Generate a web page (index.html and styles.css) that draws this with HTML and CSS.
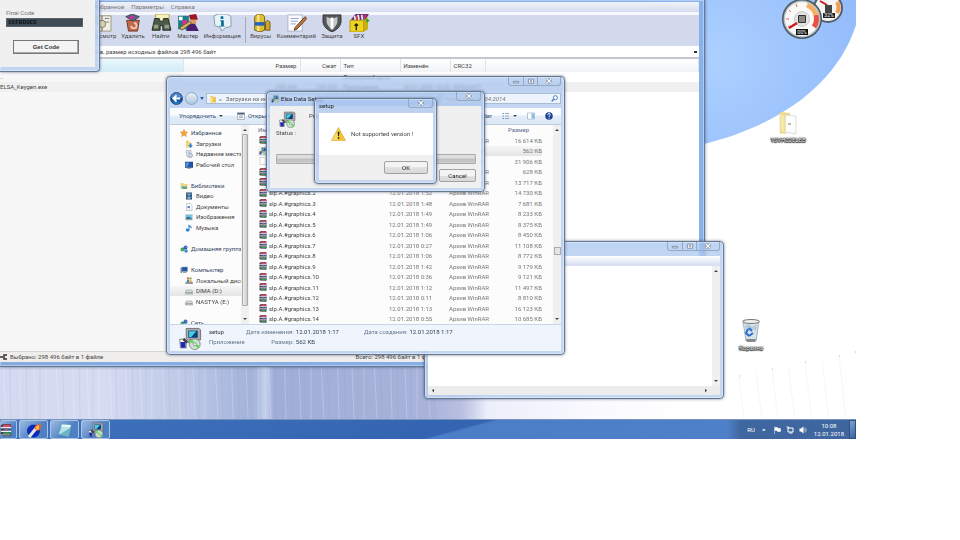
FILE: index.html
```html
<!DOCTYPE html>
<html lang="ru">
<head>
<meta charset="UTF-8">
<meta name="viewport" content="width=device-width, initial-scale=1.0">
<title>Desktop</title>
<link rel="stylesheet" href="styles.css">
</head>
<body>
<!-- Shared icons -->
<svg class="sprite" aria-hidden="true">
    <symbol id="rar" viewBox="0 0 16 16">
        <path d="M1 2l3-2h10l1 2v12l-1 2H4l-3-2z" fill="#4a4148"/>
        <path d="M4 1h10v3H4z" fill="#e0407c"/><path d="M5 6h10v3H5z" fill="#3c5fc4"/><path d="M4 11h11v3H4z" fill="#1c9a6a"/>
        <path d="M1 4h14v1.500H1zM1 9h14v1.500H1z" fill="#f0eef0"/><path d="M1 14h12v1H1z" fill="#d0d0d0"/>
        <path d="M8 1h2v3H8zM8 6h2v3H8zM8 11h2v3H8z" fill="#a8702f"/>
    </symbol>
    <symbol id="setup" viewBox="0 0 32 32">
        <path d="M10 2h18l2 2v14H12l-2-2z" fill="#a9adb0" stroke="#555"/>
        <path d="M13 5h13v10H13z" fill="#0b3f7d"/><path d="M14 6h10l-7 8h-3z" fill="#45d0dc"/>
        <path d="M15 18h10l4 4H12z" fill="#c3c3bd" stroke="#777"/>
        <path d="M1 17h6l3 3v9H2z" fill="#fff" stroke="#555"/><path d="M2 21h7v8H3z" fill="#1b2bb0"/>
        <path d="M7 15l6 5-3 3-5-5z" fill="#444"/>
        <circle cx="22" cy="24" r="7.5" fill="#cfe0d2" stroke="#6b7a6d"/>
        <path d="M22 24l-7-3 3-4zM22 24l7 2-3 4z" fill="#4fe04c"/><circle cx="22" cy="24" r="2" fill="#fff" stroke="#777"/>
    </symbol>
    <symbol id="folder" viewBox="0 0 16 16">
        <path d="M2 2h6l1 2h5v11H2z" fill="#e9c65a"/><path d="M2 2l5 3v11l-5-2z" fill="#f8e596"/>
    </symbol>
    <symbol id="star" viewBox="0 0 16 16"><path d="M8 0l2.400 5.300 5.600.7-4.200 3.900 1.200 5.700L8 12.700l-5 2.900 1.200-5.700L0 6l5.600-.7z" fill="#f0a238" stroke="#cf7f28" stroke-width=".5"/></symbol>
    <symbol id="down" viewBox="0 0 16 16"><path d="M2 1h6v14H2z" fill="#efd273"/><path d="M7 4h6v11H7z" fill="#f6e49c"/><path d="M9 7h4v4h3l-5 5-5-5h3z" fill="#2884cf"/></symbol>
    <symbol id="recent" viewBox="0 0 16 16"><path d="M2 1h10v13H4z" fill="#e6eef3" stroke="#8a99a5"/><path d="M5 4h5M5 6h5" stroke="#6b93b9"/><circle cx="11" cy="11" r="4" fill="#c8dce8" stroke="#778"/></symbol>
    <symbol id="screen" viewBox="0 0 16 16"><path d="M0 2h16v11H0z" fill="#2257a8" stroke="#173d72"/><path d="M1 3h8l-5 9H1z" fill="#5b95dc"/><path d="M4 14h8v1H4z" fill="#666"/></symbol>
    <symbol id="library" viewBox="0 0 16 16"><path d="M1 2h6l1 2h7v9H1z" fill="#f0d67c"/><path d="M3 8h11v6H3z" fill="#7fb9d8"/><path d="M5 10h9v4H5z" fill="#66a95f"/></symbol>
    <symbol id="video" viewBox="0 0 16 16"><path d="M2 1h12v14H2z" fill="#31486a"/><path d="M5 3h6v4H5zM5 9h6v5H5z" fill="#73b5e0"/><path d="M3 2v12M13 2v12" stroke="#ddd" stroke-dasharray="1 2"/></symbol>
    <symbol id="doc" viewBox="0 0 16 16"><path d="M3 1h8l3 3v11H3z" fill="#fff" stroke="#8fa2b3"/><path d="M5 6h5v4H5z" fill="#4f8cc9"/><path d="M5 12h6" stroke="#9ab"/></symbol>
    <symbol id="page" viewBox="0 0 16 16"><path d="M2 1h9l3 3v11H2z" fill="#fff" stroke="#aaa"/></symbol>
    <symbol id="image" viewBox="0 0 16 16"><path d="M1 3h14v11H1z" fill="#fff" stroke="#9aabb5"/><path d="M2 4h12v6H2z" fill="#76c1e2"/><path d="M2 10l4-3 8 4v2H2z" fill="#32748a"/></symbol>
    <symbol id="music" viewBox="0 0 16 16"><path d="M7 0c1 4 8 3 6 10-.5-3-3-4-4-4v6c-1 4-7 4-7 0s3-3 5-2z" fill="#2180cf"/></symbol>
    <symbol id="network" viewBox="0 0 16 16"><circle cx="5" cy="9" r="4" fill="#2f9b53"/><circle cx="11" cy="5" r="4" fill="#2d5dbb"/><circle cx="12" cy="12" r="3.500" fill="#308ed5"/><path d="M3 8l3 3M10 3l3 3" stroke="#fff"/></symbol>
    <symbol id="computer" viewBox="0 0 16 16"><path d="M4 2h11v9H4z" fill="#2356a6" stroke="#8c9aab"/><path d="M1 3h3v11H1z" fill="#788796"/><path d="M6 12h7v2H6z" fill="#98a6b3"/></symbol>
    <symbol id="disk" viewBox="0 0 16 16"><path d="M3 6h10l3 4v4H0v-4z" fill="#d6d9da" stroke="#85898c"/><path d="M1 10h14v3H1z" fill="#a4a9aa"/><path d="M12 11h2v1h-2z" fill="#53c34d"/></symbol>
    <symbol id="osdisk" viewBox="0 0 16 16"><path d="M2 9h13l1 5H0z" fill="#93989a"/><path d="M4 1h4v4H4z" fill="#e15b37"/><path d="M9 1h4v4H9z" fill="#69ad3e"/><path d="M4 6h4v4H4z" fill="#3488cc"/><path d="M9 6h4v4H9z" fill="#ecb636"/></symbol>
    <symbol id="close" viewBox="0 0 10 8"><path d="M2 1l6 6M8 1L2 7" stroke="#68788d" stroke-width="3.500"/><path d="M2 1l6 6M8 1L2 7" stroke="#fff" stroke-width="1.800"/></symbol>
    <symbol id="min" viewBox="0 0 10 8"><path d="M1.500 4.500h7v2h-7z" fill="#fff" stroke="#68788d"/></symbol>
    <symbol id="max" viewBox="0 0 10 8"><path d="M1.500 1.500h7v5.500h-7z" fill="#fff" stroke="#68788d"/><path d="M4 3.500h2v1.500H4z" fill="none" stroke="#68788d"/></symbol>
</svg>

<main class="desktop">
    <svg class="wallpaper" viewBox="0 0 856 419" preserveAspectRatio="none" aria-hidden="true">
        <defs>
            <linearGradient id="lilac" gradientUnits="userSpaceOnUse" x1="0" x2="856" y1="0" y2="0">
                <stop offset="0" stop-color="#d3d9f0"/><stop offset=".12" stop-color="#d6dbf1"/><stop offset=".22" stop-color="#bcc8e6"/>
                <stop offset=".29" stop-color="#a3b3da"/><stop offset=".3" stop-color="#a9b9de"/><stop offset=".31" stop-color="#c9d2ec"/><stop offset=".32" stop-color="#a0aed7"/>
                <stop offset=".5" stop-color="#a8b2da"/><stop offset=".54" stop-color="#b9c0e2"/><stop offset=".57" stop-color="#eceefa"/>
                <stop offset=".7" stop-color="#fafaff"/><stop offset=".8" stop-color="#fff"/>
            </linearGradient>
            <radialGradient id="sky" gradientUnits="userSpaceOnUse" cx="715" cy="60" r="150">
                <stop offset="0" stop-color="#acd0ff"/><stop offset="1" stop-color="#94bcfb"/>
            </radialGradient>
            <pattern id="threads" width="53" height="419" patternUnits="userSpaceOnUse">
                <path d="M2 340l4 79M19 340l2 79M33 340l3 79M46 340v79" stroke="#fff" stroke-opacity=".22"/>
                <path d="M9 340l2 79M26 340l1 79M40 340v79" stroke="#8390c4" stroke-opacity=".14"/>
            </pattern>
        </defs>
        <path d="M0 0h856v419H0z" fill="#fff"/>
        <path d="M0 340h856v79H0z" fill="url(#lilac)"/>
        <path d="M0 340h440v79H0z" fill="url(#threads)"/>
        <path d="M724 340h132v79H724z" fill="#fff"/>
        <path d="M600 0v160q60 0 104-16C770 128 835 90 856 25V0z" fill="url(#sky)"/>
        <path d="M739 377l5 42M756 373l6 46M772 370l6 49M788 366l7 53M805 363l7 56M822 360l7 59M839 356l7 63" stroke="#f7f5fb" fill="none"/>
        <path d="M739 376h1M772 369h1M805 362h1M839 356h1M855 352h1" stroke="#c3a9d6"/>
    </svg>

    <svg class="gadget" viewBox="0 0 80 40" aria-label="CPU 00%, RAM 32%">
        <circle cx="53" cy="8" r="15" fill="#555f68"/><circle cx="53" cy="8" r="13" fill="#f7f5f3"/>
        <path d="M62 2a11 11 0 0 1 0 11" stroke="#ee9e55" stroke-width="4" fill="none"/>
        <path d="M45 1l7 4" stroke="#c4191d" stroke-width="2"/><path d="M50 5h7v8h-7z" fill="#444"/>
        <path d="M48 13h12v5H48z" fill="#222"/><text x="54" y="17" class="meter">32%</text>
        <circle cx="27" cy="19" r="20" fill="#4d5962"/><circle cx="27" cy="19" r="18.500" fill="#b9c4ca"/><circle cx="27" cy="19" r="17" fill="#faf9f8"/>
        <path d="M32 5a15 15 0 0 1 9 10" stroke="#f2b066" stroke-width="5" fill="none"/><path d="M41 15a15 15 0 0 1-2 12" stroke="#e75244" stroke-width="5" fill="none"/>
        <path d="M11 19h3M14 10l2 2M21 4l1 3M13 27l2-1" stroke="#d66"/>
        <circle cx="27" cy="19" r="7.500" fill="#e3e3e3" stroke="#ccc"/>
        <path d="M23.500 15.500h7v7h-7z" fill="#8a8a82" stroke="#333"/><path d="M14 28l8-5" stroke="#c8191c" stroke-width="2.500"/>
        <path d="M21 29h12v6H21z" fill="#111"/><text x="27" y="34" class="meter">00%</text>
    </svg>

    <a href="#" class="shortcut shortcut-folder">
        <svg viewBox="0 0 20 24"><path d="M2 1l10 1v18L2 23z" fill="#ecd985"/><path d="M7 4l11 1v18l-11-2z" fill="#fdfdfd" stroke="#ddd"/><path d="M2 1l5 4v18l-5-3z" fill="#f5e9a6" stroke="#d8c371" stroke-width=".5"/><path d="M10 12h3v2h-3z" fill="#c5bc95"/></svg>
        <span>1SVH02ELEB</span>
    </a>
    <a href="#" class="shortcut shortcut-bin">
        <svg viewBox="0 0 20 24"><path d="M2 2h16l-3 20H5z" fill="#d7e3ea" stroke="#a5b1b9"/><ellipse cx="10" cy="2.500" rx="8.500" ry="2" fill="#eee" stroke="#777"/><path d="M4 7l4-2 3 3 5-3-1 7-4-2-5 3z" fill="#b6cad8"/><path d="M7 10l-2 4 3 3M8 9l3 3M8 17l4-3" stroke="#2e6ed0" stroke-width="2" fill="none"/><path d="M5 20h10l-1 3H6z" fill="#858c90"/></svg>
        <span>Корзина</span>
    </a>

    <section class="window winrar">
        <nav class="menubar"><a href="#">Файл</a><a href="#">Команды</a><a href="#">Операции</a><a href="#">Избранное</a><a href="#">Параметры</a><a href="#">Справка</a></nav>
        <div class="toolbar">
            <button><svg viewBox="0 0 24 20"><path d="M2 2h10v17H2zM12 2h10v17H12z" fill="#efeee6" stroke="#999277"/><path d="M15 5h5M15 9h5M4 5h5M4 9h5" stroke="#777"/><circle cx="12" cy="11" r="4" fill="#ddd4a8" stroke="#777"/></svg>Просмотр</button>
            <button><svg viewBox="0 0 24 20"><path d="M5 7h14l-2 12H7z" fill="#c06a4c" stroke="#6b3020"/><path d="M4 3l7-3 8 3-7 5z" fill="#56618d" stroke="#444"/><path d="M7 4l5-2 2 2-5 2z" fill="#d02f8d"/><path d="M10 13a3 3 0 1 0 3-3" stroke="#f2c6b2" stroke-width="2" fill="none"/></svg>Удалить</button>
            <button><svg viewBox="0 0 24 20"><path d="M6 0h15v11H6z" fill="#f6efb8" stroke="#b7a04d"/><path d="M5 5h5l1 3h3l1-3h5l3 13h-9v-5h-3v5H2z" fill="#4a5a48" stroke="#1d261b"/><path d="M4 12h5v4H4zM16 12h5v4h-5z" fill="#8fa086"/></svg>Найти</button>
            <button><svg viewBox="0 0 24 20"><path d="M1 2h12v15H1z" fill="#1e7c84"/><path d="M2 3h4v4H2z" fill="#fff"/><path d="M6 7h5v5H6z" fill="#e92995"/><path d="M13 1l8-1 2 6-8 2z" fill="#9c1723"/><path d="M14 6h7v5h-6z" fill="#dc9c63"/><path d="M10 19c1-10 8-8 10-8l4 8z" fill="#48206f"/><path d="M3 15l11-7 2 2-11 8z" fill="#e4b651" stroke="#654"/></svg>Мастер</button>
            <button><svg viewBox="0 0 24 20"><path d="M3 2l5-2h10l4 3v11l-6 1-4 4-2-4-6-2z" fill="#e9f3f7" stroke="#7c97a5"/><path d="M10 7h4v6h1v1h-6v-1h2V8h-1zM10.500 2.500h3v3h-3z" fill="#086f9c"/></svg>Информация</button>
            <span class="divider"></span>
            <button><svg viewBox="0 0 24 20"><path d="M5 3l3-3h5l3 3v15l-5 2-6-2z" fill="#e4be2d" stroke="#6d5716"/><path d="M17 9l2-2 3 2v9h-5z" fill="#cda72d" stroke="#6d5716"/><path d="M9 1v18" stroke="#f7eba1" stroke-width="2"/><path d="M5 9h11v4H5z" fill="#2664b9"/></svg>Вирусы</button>
            <button><svg viewBox="0 0 24 20"><path d="M3 1h16v18H3z" fill="#fcfcff" stroke="#a4aec5"/><path d="M6 5h9M6 8h8M6 11h6" stroke="#8da1c8"/><path d="M22 3l2 2-11 12-3 1 1-3z" fill="#c07838" stroke="#5b351b"/></svg>Комментарий</button>
            <button><svg viewBox="0 0 24 20"><path d="M2 1h20v8q-1 7-10 11Q3 16 2 9z" fill="#56595a" stroke="#2d2d2d"/><path d="M6 3q6 4 12 0v6q-1 5-6 8-5-3-6-8z" fill="#c3c7c7"/><path d="M12 4v13" stroke="#fff" stroke-width="3"/></svg>Защита</button>
            <button><svg viewBox="0 0 24 20"><path d="M4 5L8 0h15l-4 7H3z" fill="#71307e"/><path d="M7 2l1 5M11 1l1 6M15 1l1 6" stroke="#e7e7e7" stroke-width="2"/><path d="M9 2l1 5M19 1l-1 5" stroke="#db3a3a" stroke-width="1.500"/><path d="M2 7h15v13H2z" fill="#f0d41b" stroke="#a89318"/><path d="M17 7l5-3v13l-5 3z" fill="#c9ae14"/><path d="M9 18v-7M7 13l2-2 2 2" stroke="#222" stroke-width="1.500" fill="none"/><path d="M19 5l5 2-3 3z" fill="#24a62b"/></svg>SFX</button>
        </div>
        <div class="path">
            <select aria-label="Путь"><option>RAR архив, размер исходных файлов 298 496 байт</option></select>
        </div>
        <div class="archive">
            <table>
                <thead><tr><th>Имя</th><th>Размер</th><th>Сжат</th><th>Тип</th><th>Изменён</th><th>CRC32</th><th></th></tr></thead>
                <tbody>
                    <tr><td>..</td><td></td><td></td><td>Локальный диск</td><td></td><td></td><td></td></tr>
                    <tr class="active"><td>ELSA_Keygen.exe</td><td>298 496</td><td>128 933</td><td>Приложение</td><td>20.01.2003 13:25</td><td>905DA377</td><td></td></tr>
                </tbody>
            </table>
        </div>
        <footer class="statusbar">
            <svg viewBox="0 0 8 8"><path d="M0 4h3M7 2H4v4h3" stroke="#333" stroke-width="1.500" fill="none"/></svg>
            <span>Выбрано: 298 496 байт в 1 файле</span>
            <span>Всего: 298 496 байт в 1 файле</span>
        </footer>
    </section>

    <section class="window keygen">
        <div class="keygen-body">
            <label for="final-code">Final Code</label>
            <input id="final-code" type="text" value="15FBD9EE" readonly>
            <button>Get Code</button>
        </div>
    </section>

    <section class="window notepad">
        <header class="titlebar">
            <div class="controls"><button aria-label="Свернуть"><svg><use href="#min"/></svg></button><button aria-label="Развернуть"><svg><use href="#max"/></svg></button><button aria-label="Закрыть" class="close"><svg><use href="#close"/></svg></button></div>
        </header>
        <div class="notepad-menu"></div>
        <div class="notepad-body">
            <textarea aria-label="Текст"></textarea>
            <div class="scroll"><i class="up"></i><i class="dn"></i></div>
        </div>
        <div class="hscroll"><i class="lt"></i><i class="rt"></i></div>
    </section>

    <section class="window explorer">
        <header class="titlebar">
            <div class="controls"><button aria-label="Свернуть"><svg><use href="#min"/></svg></button><button aria-label="Развернуть"><svg><use href="#max"/></svg></button><button aria-label="Закрыть" class="close"><svg><use href="#close"/></svg></button></div>
        </header>
        <div class="navrow">
            <button class="round back" aria-label="Назад"><svg viewBox="0 0 12 12"><path d="M10 6H3M6 2.500L2.500 6 6 9.500" stroke="#fff" stroke-width="2" fill="none"/></svg></button>
            <button class="round" aria-label="Вперёд"></button>
            <i class="dn blue"></i>
            <div class="address"><svg class="icon"><use href="#folder"/></svg><span>«</span><span>Загрузки из интернета</span></div>
            <div class="search">
                <input type="text" aria-label="Поиск" placeholder="Поиск: Elsa 02.04.2014">
                <svg viewBox="0 0 8 8"><circle cx="5" cy="3" r="2.300" fill="#fff" stroke="#3277b8"/><path d="M3.200 4.800L.8 7.200" stroke="#3277b8" stroke-width="1.500"/></svg>
            </div>
        </div>
        <div class="commands">
            <button>Упорядочить <i class="dn"></i></button>
            <button class="open"><svg class="icon" viewBox="0 0 16 16"><path d="M1 1h14v14H1z" fill="#f6f7f9" stroke="#75808c"/><path d="M1 2h14v3H1z" fill="#4a5f80"/><path d="M4 8h8M4 11h8" stroke="#567"/></svg> Открыть</button>
            <button class="new-folder">New folder</button>
            <button aria-label="Вид"><svg class="icon" viewBox="0 0 16 16"><path d="M1 3h3M1 8h3M1 13h3" stroke="#6a90bb" stroke-width="2"/><path d="M6 3h8M6 8h8M6 13h8" stroke="#9ba8b8" stroke-width="2"/></svg> <i class="dn"></i></button>
            <button aria-label="Область просмотра"><svg class="icon" viewBox="0 0 16 16"><path d="M1 2h14v12H1z" fill="#fff" stroke="#7b90a5"/><path d="M9 3h5v10H9z" fill="#7fc1d9"/></svg></button>
            <button aria-label="Справка"><svg class="icon" viewBox="0 0 16 16"><circle cx="8" cy="8" r="7.500" fill="#1d4398"/><path d="M5.500 6q0-3 2.500-3t2.500 2.500Q10.500 7 8 8.500V10M8 11.500v2" stroke="#fff" stroke-width="1.800" fill="none"/></svg></button>
        </div>
        <div class="panes">
            <ul class="tree">
                <li class="group"><svg class="icon"><use href="#star"/></svg>Избранное</li>
                <li><svg class="icon"><use href="#down"/></svg>Загрузки</li>
                <li><svg class="icon"><use href="#recent"/></svg>Недавние места</li>
                <li><svg class="icon"><use href="#screen"/></svg>Рабочий стол</li>
                <li></li>
                <li class="group"><svg class="icon"><use href="#library"/></svg>Библиотеки</li>
                <li><svg class="icon"><use href="#video"/></svg>Видео</li>
                <li><svg class="icon"><use href="#doc"/></svg>Документы</li>
                <li><svg class="icon"><use href="#image"/></svg>Изображения</li>
                <li><svg class="icon"><use href="#music"/></svg>Музыка</li>
                <li></li>
                <li class="group"><svg class="icon"><use href="#network"/></svg>Домашняя группа</li>
                <li></li>
                <li class="group"><svg class="icon"><use href="#computer"/></svg>Компьютер</li>
                <li><svg class="icon"><use href="#osdisk"/></svg>Локальный диск</li>
                <li class="selected"><svg class="icon"><use href="#disk"/></svg>DIMA (D:)</li>
                <li><svg class="icon"><use href="#disk"/></svg>NASTYA (E:)</li>
                <li></li>
                <li class="group"><svg class="icon"><use href="#network"/></svg>Сеть</li>
            </ul>
            <div class="scroll tree-scroll"><i class="up"></i><b></b><i class="dn"></i></div>
            <table class="files">
                <thead><tr><th>Имя</th><th>Дата изменения</th><th>Тип</th><th>Размер</th></tr></thead>
                <tbody id="files"></tbody>
            </table>
            <div class="scroll file-scroll"><i class="up"></i><b></b><i class="dn"></i></div>
        </div>
        <footer class="details">
            <svg class="big-icon"><use href="#setup"/></svg>
            <div class="file-name"><strong>setup</strong><span>Приложение</span></div>
            <dl><dt>Дата изменения:</dt><dd>12.01.2018 1:17</dd><dt>Размер:</dt><dd>562 КБ</dd></dl>
            <dl><dt>Дата создания:</dt><dd>12.01.2018 1:17</dd></dl>
        </footer>
    </section>

    <section class="window elsa">
        <header class="titlebar">
            <svg class="icon"><use href="#setup"/></svg><h2>Elsa Data Setup</h2>
            <div class="controls"><button aria-label="Закрыть" class="close"><svg><use href="#close"/></svg></button></div>
        </header>
        <div class="elsa-body">
            <div class="elsa-top"><svg class="mid-icon"><use href="#setup"/></svg><span>Program setup</span></div>
            <label for="progress">Status :</label>
            <progress id="progress" max="100" value="0"></progress>
            <button class="btn">Cancel</button>
        </div>
    </section>

    <section class="window message" role="dialog" aria-label="setup">
        <header class="titlebar">
            <h2>setup</h2>
            <div class="controls"><button aria-label="Закрыть" class="close"><svg><use href="#close"/></svg></button></div>
        </header>
        <div class="message-text">
            <svg viewBox="0 0 32 30"><path d="M16 1l15 28H1z" fill="#f7c52b" stroke="#c29321" stroke-linejoin="round"/><path d="M16 4v24H3z" fill="#fbdc66"/><path d="M14 10h4l-1 10h-2zM14.500 22h3v3.500h-3z" fill="#222"/></svg>
            <p>Not supported version !</p>
        </div>
        <div class="message-actions"><button class="btn">OK</button></div>
    </section>
</main>

<footer class="taskbar">
    <button class="task" aria-label="WinRAR"><svg viewBox="0 0 32 32"><use href="#rar"/></svg></button>
    <button class="task" aria-label="Keygen"><svg viewBox="0 0 32 32"><circle cx="15" cy="18" r="13" fill="#0b2bbd"/><path d="M6 30L20 13" stroke="#e8e8e0" stroke-width="6"/><path d="M17 9l10-7v5l4-2-3 11-8 2z" fill="#f2612a"/><path d="M20 10l6-4-1 8-4 2z" fill="#ffd84b"/></svg></button>
    <button class="task" aria-label="Блокнот"><svg viewBox="0 0 32 32"><path d="M10 5l18 1-5 23-20-5z" fill="#b3e2e8" stroke="#5a9fb0"/><path d="M10 5l18 1-2 5-18-2z" fill="#e6f8fa"/><path d="M26 12l-3 17-18-4z" fill="#6ab5c2"/></svg></button>
    <button class="task" aria-label="setup"><svg><use href="#setup"/></svg></button>
    <div class="tray">
        <span>RU</span>
        <i class="up"></i>
        <svg viewBox="0 0 16 16"><path d="M3 1v15M4 3h5l1 2h5v6H9L8 9H4z" fill="#fff" stroke="#fff"/></svg>
        <svg viewBox="0 0 16 16"><path d="M4 4h10v8H4zM1 2h4v4M7 14h6" fill="none" stroke="#fff" stroke-width="2"/></svg>
        <svg viewBox="0 0 16 16"><path d="M1 5h3l5-4v14l-5-4H1z" fill="#fff"/><path d="M11 5q2 3 0 6M13 3q3 5 0 10" stroke="#fff" fill="none"/></svg>
        <time datetime="2018-01-12T10:08">10:08<br>12.01.2018</time>
        <button class="peek" aria-label="Свернуть все окна"></button>
    </div>
</footer>

<script>
    // name, date, type, size, icon
    const files = [
        ['slp.A', '12.01.2018 1:50', 'Архив WinRAR', '16 614', 'rar'],
        ['setup', '12.01.2018 1:17', 'Приложение', '562', 'setup'],
        ['slp', '12.01.2018 1:17', 'Файл XHTML', '31 906', 'page'],
        ['slp.A.#data', '12.01.2018 1:17', 'Архив WinRAR', '628', 'rar'],
        ['slp.A.#graphics.1', '12.01.2018 1:50', 'Архив WinRAR', '13 717', 'rar'],
        ['slp.A.#graphics.2', '12.01.2018 1:52', 'Архив WinRAR', '14 730', 'rar'],
        ['slp.A.#graphics.3', '12.01.2018 1:48', 'Архив WinRAR', '7 681', 'rar'],
        ['slp.A.#graphics.4', '12.01.2018 1:49', 'Архив WinRAR', '8 233', 'rar'],
        ['slp.A.#graphics.5', '12.01.2018 1:49', 'Архив WinRAR', '8 375', 'rar'],
        ['slp.A.#graphics.6', '12.01.2018 1:06', 'Архив WinRAR', '8 450', 'rar'],
        ['slp.A.#graphics.7', '12.01.2018 0:27', 'Архив WinRAR', '11 108', 'rar'],
        ['slp.A.#graphics.8', '12.01.2018 1:06', 'Архив WinRAR', '8 772', 'rar'],
        ['slp.A.#graphics.9', '12.01.2018 1:42', 'Архив WinRAR', '9 179', 'rar'],
        ['slp.A.#graphics.10', '12.01.2018 0:36', 'Архив WinRAR', '9 121', 'rar'],
        ['slp.A.#graphics.11', '12.01.2018 1:12', 'Архив WinRAR', '11 497', 'rar'],
        ['slp.A.#graphics.12', '12.01.2018 0:11', 'Архив WinRAR', '8 810', 'rar'],
        ['slp.A.#graphics.13', '12.01.2018 1:13', 'Архив WinRAR', '16 123', 'rar'],
        ['slp.A.#graphics.14', '12.01.2018 0:55', 'Архив WinRAR', '10 685', 'rar']
    ];

    const tbody = document.getElementById('files');
    files.forEach(function([name, date, type, size, icon]) {
        const row = document.createElement('tr');
        if (name === 'setup') {
            row.classList.add('selected');
        }
        row.innerHTML = `<td><svg class="icon"><use href="#${icon}"/></svg>${name}</td><td>${date}</td><td>${type}</td><td>${size} КБ</td>`;
        tbody.appendChild(row);
    });
</script>
</body>
</html>
```
FILE: styles.css
```css
* {
    box-sizing: border-box;
}

body {
    margin: 0;
    padding: 0 104px 101px 0;
    min-height: 100vh;
    display: flex;
    flex-direction: column;
    background-color: #fff;
    font-family: Roboto, "Open Sans", sans-serif;
    font-size: 6px;
    line-height: 10px;
    color: #444;
}

button,
input,
select,
textarea {
    font: inherit;
    color: inherit;
    margin: 0;
    padding: 0;
    border: none;
    background: none;
    outline: none;
}

a {
    color: inherit;
    text-decoration: none;
}

h2,
p,
ul,
dl,
dd {
    margin: 0;
    padding: 0;
    font-size: 6px;
    font-weight: normal;
}

table {
    border-collapse: collapse;
}

th {
    font-weight: normal;
    text-align: left;
}

.sprite {
    position: absolute;
    width: 0;
    height: 0;
}

.icon {
    width: 8px;
    height: 8px;
    flex: none;
}

/* small arrows */
.up,
.dn,
.lt,
.rt {
    display: inline-block;
    width: 4px;
    height: 2px;
    background-color: #444;
    clip-path: polygon(0 0, 100% 0, 50% 100%);
}

.up {
    clip-path: polygon(50% 0, 100% 100%, 0 100%);
}

.lt,
.rt {
    width: 2px;
    height: 4px;
    clip-path: polygon(0 50%, 100% 0, 100% 100%);
}

.rt {
    clip-path: polygon(0 0, 100% 50%, 0 100%);
}

.blue {
    background-color: #2d64a3;
    width: 4px;
    height: 3px;
}

/* desktop */
.desktop {
    position: relative;
    flex: 1;
    overflow: hidden;
}

.wallpaper {
    position: absolute;
    width: 100%;
    height: 100%;
}

.gadget {
    position: absolute;
    left: 775px;
    top: 0;
    width: 80px;
    height: 40px;
}

.meter {
    font-size: 5px;
    fill: #fff;
    text-anchor: middle;
}

.shortcut {
    position: absolute;
    width: 44px;
    display: flex;
    flex-direction: column;
    align-items: center;
    color: #fff;
    text-shadow: 0 0 1px #000, 0 0 1px #000, 0 0 2px #000, 0 1px 1px #000;
}

.shortcut svg {
    width: 20px;
    height: 24px;
}

.shortcut-folder {
    left: 766px;
    top: 111px;
}

.shortcut-bin {
    left: 729px;
    top: 319px;
}

/* windows */
.window {
    position: absolute;
    display: flex;
    flex-direction: column;
    padding: 0 3px 3px;
    border-radius: 4px;
    border: 1px solid #66788f;
    background: linear-gradient(rgba(160, 192, 238, .68), rgba(186, 208, 241, .85) 30px);
    backdrop-filter: blur(1px);
    box-shadow: 0 0 3px rgba(20, 40, 80, .6), inset 0 0 0 1px rgba(255, 255, 255, .35);
    overflow: hidden;
}

.titlebar {
    display: flex;
    align-items: flex-start;
    flex: none;
    height: 14px;
}

.titlebar h2 {
    line-height: 13px;
    color: #222;
}

.controls {
    display: flex;
    margin-left: auto;
    border: 1px solid #93a9c6;
    border-top: none;
    border-radius: 0 0 3px 3px;
}

.controls button {
    width: 14px;
    height: 8px;
    display: flex;
    align-items: center;
    justify-content: center;
}

.controls button + button {
    border-left: 1px solid #93a9c6;
}

.controls .close {
    width: 23px;
}

.controls svg {
    width: 8px;
    height: 6px;
}

.btn {
    height: 13px;
    border: 1px solid #a2a2a2;
    border-radius: 2px;
    background: linear-gradient(#f4f4f4 50%, #e2e2e2 50%, #d8d8d8);
    color: #222;
}

/* WinRAR */
.winrar {
    left: 0;
    top: 0;
    width: 705px;
    height: 367px;
    padding: 2px 5px 4px 0;
    border-width: 0 1px 1px 0;
    border-radius: 0;
    background: linear-gradient(90deg, #85abe0, #87b2ed);
}

.menubar {
    display: flex;
    gap: 7px;
    height: 10px;
    padding-left: 3px;
    background: linear-gradient(#f1f3fa, #d5dcee);
    line-height: 9px;
    color: #777;
}

.toolbar {
    display: flex;
    align-items: flex-start;
    gap: 3px;
    height: 34px;
    padding: 2px 0 0 87px;
    border-top: 3px solid #f7f8fd;
    background-color: #d3d9ec;
}

.toolbar button {
    min-width: 24px;
    padding: 0 1px;
    display: flex;
    flex-direction: column;
    align-items: center;
    line-height: 8px;
}

.toolbar svg {
    width: 22px;
    height: 18px;
    margin-top: -3px;
}

.divider {
    width: 1px;
    height: 26px;
    background-color: #a3a9bb;
}

.path {
    height: 13px;
    display: flex;
    background-color: #fff;
    border-bottom: 2px solid #c2c6cf;
}

.path select {
    flex: 1;
    appearance: none;
    padding-left: 74px;
    background: linear-gradient(#333, #333) no-repeat right 2px center / 3px 2px;
}

.archive {
    flex: 1;
    background: linear-gradient(90deg, #f7f7f7 183px, #fff 183px);
}

.archive table {
    width: 100%;
    table-layout: fixed;
    white-space: nowrap;
}

.archive th {
    height: 13px;
    padding: 0 3px;
    background: linear-gradient(#fff, #f1f2f4);
    border-right: 1px solid #e0e3e8;
}

.archive th:first-child {
    width: 183px;
    background: linear-gradient(#eaf7fd, #d3ecf7);
    color: transparent;
}

.archive th:nth-child(2) { width: 117px; }
.archive th:nth-child(3) { width: 40px; }
.archive th:nth-child(4) { width: 60px; }
.archive th:nth-child(5) { width: 50px; }
.archive th:nth-child(6) { width: 35px; }

.archive th:nth-child(2),
.archive th:nth-child(3),
.archive td:nth-child(2),
.archive td:nth-child(3) {
    text-align: right;
}

.archive td {
    height: 10px;
    padding: 0 3px;
}

.archive td:first-child {
    padding-left: 0;
}

.archive .active {
    background-color: #f0f0f0;
}

.statusbar {
    display: flex;
    align-items: center;
    gap: 2px;
    height: 11px;
    background-color: #f0eeec;
    border-top: 1px solid #d5d5d5;
}

.statusbar svg {
    width: 8px;
    height: 8px;
}

.statusbar span {
    flex: 1;
}

/* keygen */
.keygen {
    left: 0;
    top: 0;
    width: 100px;
    height: 72px;
    padding: 0 4px 4px 0;
    border-width: 0 1px 1px 0;
    border-radius: 0 0 4px 0;
}

.keygen-body {
    flex: 1;
    display: flex;
    flex-direction: column;
    padding: 8px 12px 0 6px;
    background-color: #f0f0f0;
    color: #777;
}

.keygen-body input {
    width: 100%;
    height: 9px;
    padding-left: 1px;
    background-color: #3f4b55;
    border: 1px solid #59636b;
    color: #0c1015;
    font-family: "Liberation Mono", monospace;
    font-weight: bold;
    line-height: 7px;
}

.keygen-body button {
    height: 14px;
    margin: 13px 4px 0 7px;
    border: 1px solid #777;
    box-shadow: inset -1px -1px #aaa;
    background-color: #f4f4f4;
    color: #333;
    font-family: "Liberation Sans", sans-serif;
    font-weight: bold;
}

/* notepad */
.notepad {
    left: 424px;
    top: 241px;
    width: 300px;
    height: 158px;
}

.notepad-menu {
    height: 10px;
    background: linear-gradient(#fff, #d5dcf0);
}

.notepad-body {
    flex: 1;
    display: flex;
}

.notepad-body textarea {
    flex: 1;
    resize: none;
    background-color: #fff;
}

.scroll {
    display: flex;
    flex-direction: column;
    justify-content: space-between;
    align-items: center;
    width: 8px;
    padding: 4px 0;
    background-color: #f0f0f0;
}

.hscroll {
    display: flex;
    justify-content: space-between;
    align-items: center;
    height: 9px;
    padding: 0 13px 0 4px;
    background-color: #ececec;
}

/* explorer */
.explorer {
    left: 166px;
    top: 76px;
    width: 399px;
    height: 279px;
}

.navrow {
    display: flex;
    align-items: center;
    gap: 2px;
    height: 17px;
    padding-bottom: 2px;
}

.round {
    width: 13px;
    height: 13px;
    border: 1px solid #8ca2bd;
    border-radius: 50%;
    background: linear-gradient(#e8eff7, #b2c6df);
}

.back {
    display: flex;
    border-color: #23477d;
    background: linear-gradient(#4e87cb 50%, #0c3c81 50%, #2383cf);
}

.address,
.search {
    display: flex;
    align-items: center;
    height: 11px;
    padding: 0 2px;
    border: 1px solid #a9bcd4;
    background-color: rgba(245, 249, 254, .85);
}

.address {
    flex: 1;
    gap: 2px;
    color: #666;
}

.address span:last-child {
    padding-left: 2px;
}

.search {
    width: 120px;
}

.search input {
    flex: 1;
    min-width: 0;
    font-style: italic;
}

.search input::placeholder {
    color: #777;
}

.search svg {
    width: 7px;
    height: 7px;
}

.commands {
    display: flex;
    align-items: center;
    gap: 10px;
    height: 17px;
    padding: 0 8px 0 9px;
    background: linear-gradient(#fafcff 45%, #e3ecf8 50%, #dde8f6);
    border-bottom: 1px solid #bccbdf;
    color: #37506f;
}

.commands button {
    display: flex;
    align-items: center;
    gap: 3px;
}

.commands .open {
    margin-left: 4px;
}

.commands .new-folder {
    margin-left: auto;
}

.panes {
    flex: 1;
    min-height: 0;
    display: flex;
    background-color: #fcfcfc;
}

.tree {
    width: 71px;
    margin-bottom: -4px;
    padding-top: 3px;
    display: grid;
    grid-auto-rows: 1fr;
    list-style: none;
    white-space: nowrap;
    overflow: hidden;
}

.tree li {
    display: flex;
    align-items: center;
    gap: 3px;
    padding-left: 15px;
    min-height: 0;
}

.tree .group {
    padding-left: 10px;
    color: #33475f;
}

.selected {
    background: linear-gradient(#f6f6f6, #e4e4e4);
}

.tree-scroll b {
    flex: 1;
    width: 6px;
    margin: 3px 0 12px;
    border: 1px solid #aaa;
    border-radius: 1px;
    background: linear-gradient(90deg, #eee, #ccc);
}

.files {
    flex: 1;
    display: flex;
    flex-direction: column;
    padding-left: 9px;
    white-space: nowrap;
}

.files tbody {
    flex: 1;
    display: grid;
    grid-auto-rows: 1fr;
}

.files tr {
    display: grid;
    grid-template-columns: 131px 60px 1fr 34px;
    align-items: center;
    margin-right: 11px;
    color: #777;
}

.files th {
    padding: 0;
    color: #59708f;
}

.files td {
    padding: 0;
    line-height: 9px;
}

.files td:first-child {
    display: flex;
    align-items: center;
    gap: 2px;
    padding-left: 1px;
    color: #444;
}

.files td:last-child {
    text-align: right;
}

.file-scroll b {
    width: 7px;
    height: 8px;
    margin-top: 52px;
    border: 1px solid #aaa;
    background-color: #e4e4e4;
}

.details {
    display: flex;
    align-items: flex-start;
    height: 27px;
    padding: 2px 9px;
    background-color: #f0f4fc;
    border-top: 1px solid #c8d6ea;
    color: #66788f;
}

.big-icon {
    width: 23px;
    height: 23px;
    margin-right: 7px;
}

.file-name {
    display: flex;
    flex-direction: column;
    width: 37px;
}

.file-name strong {
    font-weight: normal;
    color: #333;
}

.details dl {
    display: grid;
    grid-template-columns: auto auto;
    gap: 0 2px;
    margin-right: 25px;
}

.details dt {
    text-align: right;
}

.details dd {
    color: #345;
}

/* setup progress dialog */
.elsa {
    left: 266px;
    top: 91px;
    width: 219px;
    height: 101px;
}

.elsa .icon {
    margin: 3px 2px 0 1px;
}

.elsa-body {
    flex: 1;
    display: flex;
    flex-direction: column;
    padding: 5px 5px 5px 6px;
    background-color: #f0f0f0;
}

.elsa-top {
    display: flex;
    gap: 13px;
    padding-left: 3px;
    line-height: 9px;
}

.mid-icon {
    width: 17px;
    height: 17px;
}

.elsa-body progress {
    appearance: none;
    width: 100%;
    height: 10px;
    margin: 16px 0 5px;
    border: 1px solid #aaa;
    border-radius: 1px;
    background: linear-gradient(#dedede 40%, #bdbdbd 50%, #cfcfcf);
}

.elsa-body progress::-webkit-progress-bar {
    background: none;
}

.elsa-body .btn {
    align-self: flex-end;
    width: 37px;
}

/* message box */
.message {
    left: 314px;
    top: 98px;
    width: 123px;
    height: 86px;
    padding: 0 3px 3px 4px;
}

.message-text {
    flex: 1;
    display: flex;
    align-items: center;
    gap: 5px;
    padding-left: 12px;
    background-color: #fff;
}

.message-text svg {
    width: 15px;
    height: 14px;
}

.message-actions {
    display: flex;
    justify-content: flex-end;
    height: 25px;
    padding: 6px 5px;
    background-color: #f0f0f0;
}

.message-actions .btn {
    width: 44px;
}

/* taskbar */
.taskbar {
    display: flex;
    gap: 2px;
    height: 20px;
    border-top: 1px solid #7794bd;
    background: linear-gradient(165deg, #3f73bd, #3464b1 53%, #4c7ec7 54%, #4f82ca);
}

.task {
    width: 29px;
    border: 1px solid #a9c3e4;
    border-radius: 2px;
    background: linear-gradient(135deg, #9dbbe2, #4f80c4 60%);
}

.task:first-child {
    width: 17px;
    padding-right: 6px;
    border-left: none;
}

.task svg {
    display: block;
    width: 16px;
    height: 16px;
    margin: 0 auto;
}

.task:first-child svg {
    width: 12px;
}

.tray {
    display: flex;
    align-items: center;
    gap: 5px;
    margin-left: auto;
    padding-left: 20px;
    background: linear-gradient(90deg, transparent, #3f669f 14px);
    color: #fff;
}

.tray svg {
    width: 8px;
    height: 8px;
}

.tray .up {
    margin: 0 2px;
    background-color: #fff;
}

.tray time {
    line-height: 8px;
    text-align: center;
    padding-left: 2px;
}

.peek {
    width: 7px;
    align-self: stretch;
    border: 1px solid #2f4f80;
    background: linear-gradient(135deg, #7ea3d3, #3a629d);
}
```
